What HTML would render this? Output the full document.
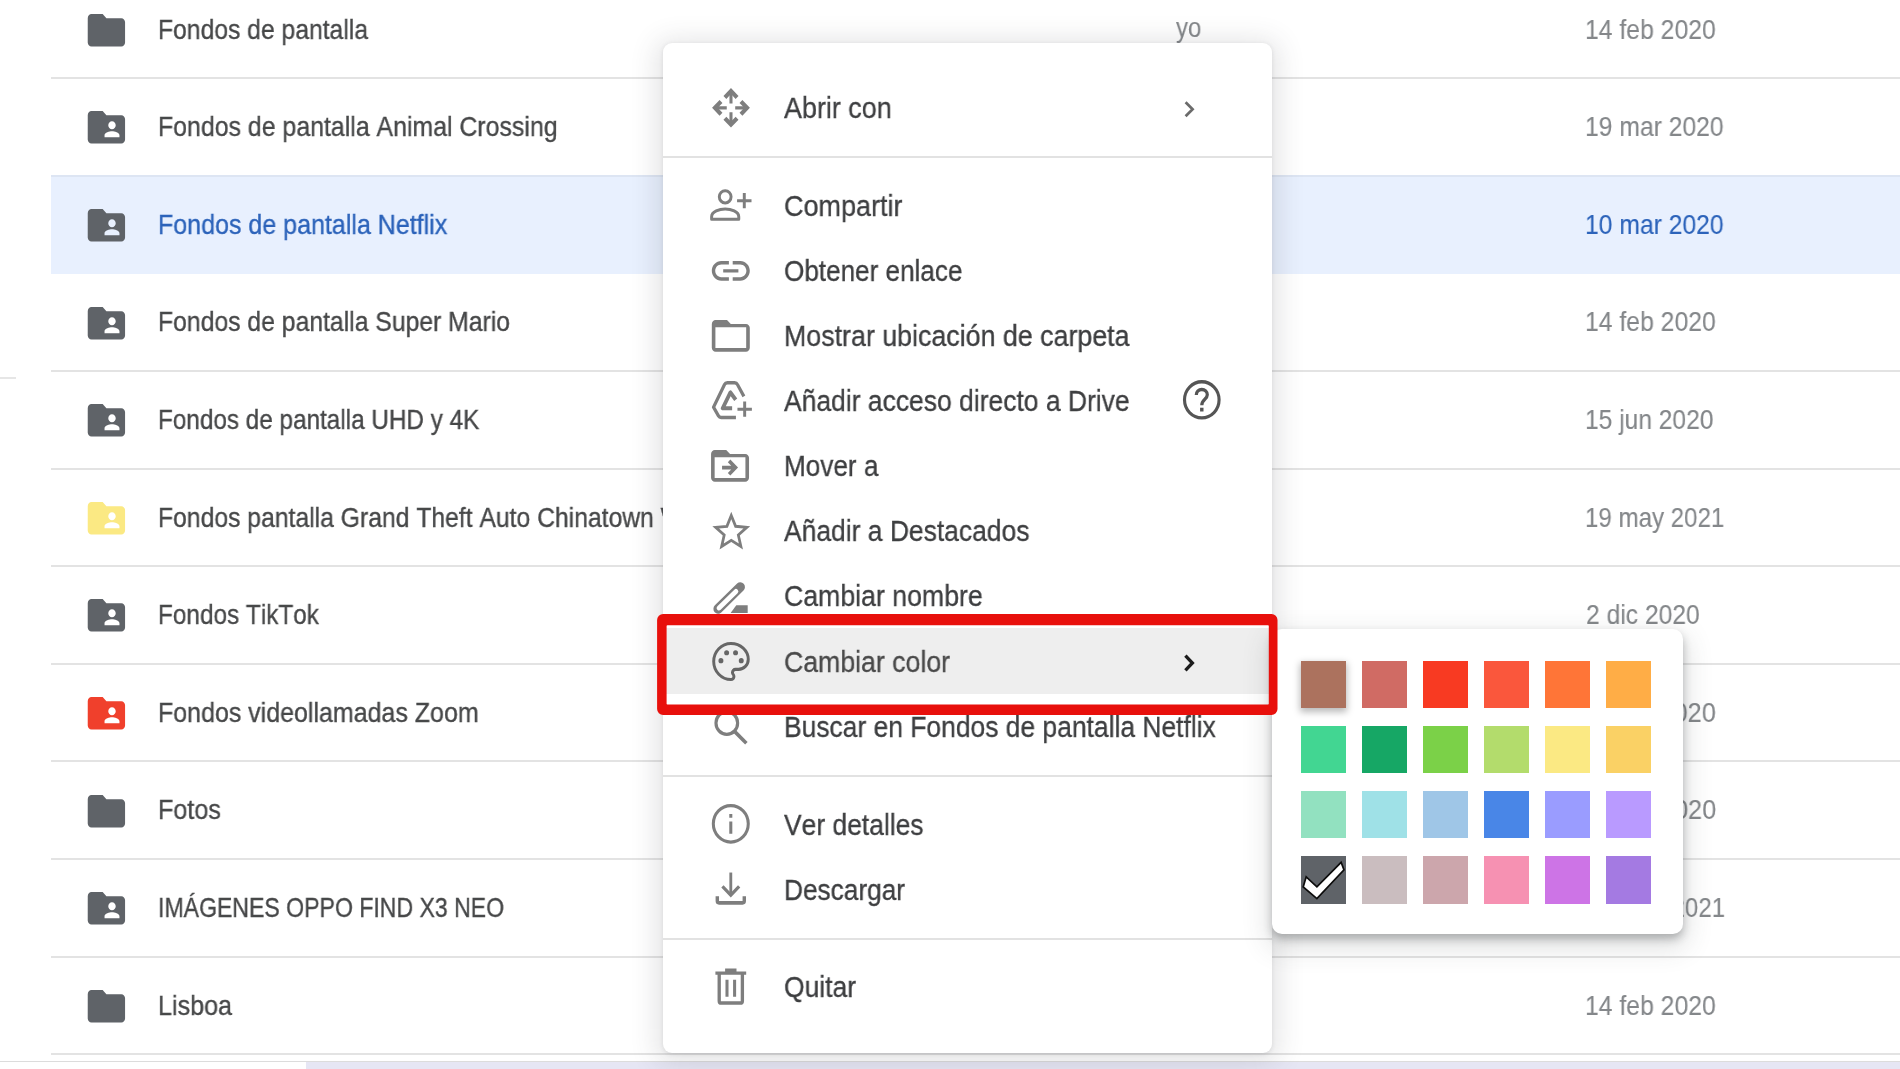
<!DOCTYPE html>
<html><head><meta charset="utf-8"><title>Drive</title>
<style>
html,body{margin:0;padding:0;}
body{width:1900px;height:1069px;overflow:hidden;background:#fff;position:relative;font-family:"Liberation Sans",sans-serif;font-kerning:none;}
.t{position:absolute;white-space:nowrap;line-height:1;transform-origin:0 50%;display:block;will-change:transform;-webkit-text-stroke:0.35px currentColor;}
.sep{position:absolute;left:51px;right:0;height:2px;background:#e3e3e3;}
.ico{position:absolute;display:block;}
.abs{position:absolute;}
#menu{position:absolute;left:663px;top:43px;width:609px;height:1009.5px;background:#fff;border-radius:9px;
 box-shadow:0 1px 4px 0 rgba(60,64,67,.13),0 4px 26px 8px rgba(60,64,67,.13);}
.msep{position:absolute;left:663px;width:609px;height:2px;background:#e2e2e2;}
#pal{position:absolute;left:1271.8px;top:629.2px;width:411px;height:305.3px;background:#fff;border-radius:10px;
 box-shadow:0 5px 9px 0 rgba(40,44,47,.30),0 10px 26px 5px rgba(60,64,67,.15);}
.sw{position:absolute;width:45px;height:47.6px;}
#red{position:absolute;left:0;top:0;}
</style></head><body>

<div class="abs" style="left:51px;right:0;top:175.4px;height:98.6px;background:#e8f0fe"></div>
<div class="sep" style="top:77.2px;background:#e3e3e3"></div>
<div class="sep" style="top:174.8px;background:#dde5f3"></div>
<div class="sep" style="top:370.0px;background:#e3e3e3"></div>
<div class="sep" style="top:467.6px;background:#e3e3e3"></div>
<div class="sep" style="top:565.2px;background:#e3e3e3"></div>
<div class="sep" style="top:662.8px;background:#e3e3e3"></div>
<div class="sep" style="top:760.4px;background:#e3e3e3"></div>
<div class="sep" style="top:858.0px;background:#e3e3e3"></div>
<div class="sep" style="top:955.6px;background:#e3e3e3"></div>
<div class="sep" style="top:1053.2px;background:#e3e3e3"></div>
<svg class="ico" style="left:83.7px;top:5.8px" width="44.8" height="48.5" viewBox="0 0 24 24" preserveAspectRatio="none"><path fill="#5f6368" d="M10 4H4c-1.1 0-1.99.9-1.99 2L2 18c0 1.1.9 2 2 2h16c1.1 0 2-.9 2-2V8c0-1.1-.9-2-2-2h-8l-2-2z"/></svg>
<span class="t" style="left:158.00px;top:15.52px;font-size:27.50px;color:#474849;transform:scaleX(0.8977);">Fondos de pantalla</span>
<span class="t" style="left:1585.01px;top:15.52px;font-size:27.50px;color:#84878a;transform:scaleX(0.9000);-webkit-text-stroke-width:0.12px;">14 feb 2020</span>
<svg class="ico" style="left:83.7px;top:103.4px" width="44.8" height="48.5" viewBox="0 0 24 24" preserveAspectRatio="none"><path fill="#5f6368" d="M20 6h-8l-2-2H4c-1.1 0-1.99.9-1.99 2L2 18c0 1.1.9 2 2 2h16c1.1 0 2-.9 2-2V8c0-1.1-.9-2-2-2zm-5 3c1.1 0 2 .9 2 2s-.9 2-2 2-2-.9-2-2 .9-2 2-2zm4 8h-8v-1c0-1.33 2.67-2 4-2s4 .67 4 2v1z"/></svg>
<span class="t" style="left:158.00px;top:113.12px;font-size:27.50px;color:#474849;transform:scaleX(0.9045);">Fondos de pantalla Animal Crossing</span>
<span class="t" style="left:1585.02px;top:113.12px;font-size:27.50px;color:#84878a;transform:scaleX(0.8979);-webkit-text-stroke-width:0.12px;">19 mar 2020</span>
<svg class="ico" style="left:83.7px;top:201.1px" width="44.8" height="48.5" viewBox="0 0 24 24" preserveAspectRatio="none"><path fill="#5f6368" d="M20 6h-8l-2-2H4c-1.1 0-1.99.9-1.99 2L2 18c0 1.1.9 2 2 2h16c1.1 0 2-.9 2-2V8c0-1.1-.9-2-2-2zm-5 3c1.1 0 2 .9 2 2s-.9 2-2 2-2-.9-2-2 .9-2 2-2zm4 8h-8v-1c0-1.33 2.67-2 4-2s4 .67 4 2v1z"/></svg>
<span class="t" style="left:158.00px;top:210.72px;font-size:27.50px;color:#2c63ba;transform:scaleX(0.9097);">Fondos de pantalla Netflix</span>
<span class="t" style="left:1585.02px;top:210.72px;font-size:27.50px;color:#2c63ba;transform:scaleX(0.8979);-webkit-text-stroke-width:0.12px;">10 mar 2020</span>
<svg class="ico" style="left:83.7px;top:298.6px" width="44.8" height="48.5" viewBox="0 0 24 24" preserveAspectRatio="none"><path fill="#5f6368" d="M20 6h-8l-2-2H4c-1.1 0-1.99.9-1.99 2L2 18c0 1.1.9 2 2 2h16c1.1 0 2-.9 2-2V8c0-1.1-.9-2-2-2zm-5 3c1.1 0 2 .9 2 2s-.9 2-2 2-2-.9-2-2 .9-2 2-2zm4 8h-8v-1c0-1.33 2.67-2 4-2s4 .67 4 2v1z"/></svg>
<span class="t" style="left:158.00px;top:308.32px;font-size:27.50px;color:#474849;transform:scaleX(0.8995);">Fondos de pantalla Super Mario</span>
<span class="t" style="left:1585.01px;top:308.32px;font-size:27.50px;color:#84878a;transform:scaleX(0.9000);-webkit-text-stroke-width:0.12px;">14 feb 2020</span>
<svg class="ico" style="left:83.7px;top:396.2px" width="44.8" height="48.5" viewBox="0 0 24 24" preserveAspectRatio="none"><path fill="#5f6368" d="M20 6h-8l-2-2H4c-1.1 0-1.99.9-1.99 2L2 18c0 1.1.9 2 2 2h16c1.1 0 2-.9 2-2V8c0-1.1-.9-2-2-2zm-5 3c1.1 0 2 .9 2 2s-.9 2-2 2-2-.9-2-2 .9-2 2-2zm4 8h-8v-1c0-1.33 2.67-2 4-2s4 .67 4 2v1z"/></svg>
<span class="t" style="left:158.00px;top:405.92px;font-size:27.50px;color:#474849;transform:scaleX(0.8831);">Fondos de pantalla UHD y 4K</span>
<span class="t" style="left:1585.03px;top:405.92px;font-size:27.50px;color:#84878a;transform:scaleX(0.8935);-webkit-text-stroke-width:0.12px;">15 jun 2020</span>
<svg class="ico" style="left:83.7px;top:493.8px" width="44.8" height="48.5" viewBox="0 0 24 24" preserveAspectRatio="none"><path fill="#fbe983" d="M20 6h-8l-2-2H4c-1.1 0-1.99.9-1.99 2L2 18c0 1.1.9 2 2 2h16c1.1 0 2-.9 2-2V8c0-1.1-.9-2-2-2zm-5 3c1.1 0 2 .9 2 2s-.9 2-2 2-2-.9-2-2 .9-2 2-2zm4 8h-8v-1c0-1.33 2.67-2 4-2s4 .67 4 2v1z"/></svg>
<span class="t" style="left:158.00px;top:503.52px;font-size:27.50px;color:#474849;transform:scaleX(0.8985);">Fondos pantalla Grand Theft Auto Chinatown Wars</span>
<span class="t" style="left:1585.06px;top:503.52px;font-size:27.50px;color:#84878a;transform:scaleX(0.8762);-webkit-text-stroke-width:0.12px;">19 may 2021</span>
<svg class="ico" style="left:83.7px;top:591.4px" width="44.8" height="48.5" viewBox="0 0 24 24" preserveAspectRatio="none"><path fill="#5f6368" d="M20 6h-8l-2-2H4c-1.1 0-1.99.9-1.99 2L2 18c0 1.1.9 2 2 2h16c1.1 0 2-.9 2-2V8c0-1.1-.9-2-2-2zm-5 3c1.1 0 2 .9 2 2s-.9 2-2 2-2-.9-2-2 .9-2 2-2zm4 8h-8v-1c0-1.33 2.67-2 4-2s4 .67 4 2v1z"/></svg>
<span class="t" style="left:158.00px;top:601.12px;font-size:27.50px;color:#474849;transform:scaleX(0.8851);">Fondos TikTok</span>
<span class="t" style="left:1585.66px;top:601.12px;font-size:27.50px;color:#84878a;transform:scaleX(0.8968);-webkit-text-stroke-width:0.12px;">2 dic 2020</span>
<svg class="ico" style="left:83.7px;top:689.0px" width="44.8" height="48.5" viewBox="0 0 24 24" preserveAspectRatio="none"><path fill="#f0402c" d="M20 6h-8l-2-2H4c-1.1 0-1.99.9-1.99 2L2 18c0 1.1.9 2 2 2h16c1.1 0 2-.9 2-2V8c0-1.1-.9-2-2-2zm-5 3c1.1 0 2 .9 2 2s-.9 2-2 2-2-.9-2-2 .9-2 2-2zm4 8h-8v-1c0-1.33 2.67-2 4-2s4 .67 4 2v1z"/></svg>
<span class="t" style="left:158.00px;top:698.72px;font-size:27.50px;color:#474849;transform:scaleX(0.9081);">Fondos videollamadas Zoom</span>
<span class="t" style="left:1584.97px;top:698.72px;font-size:27.50px;color:#84878a;transform:scaleX(0.9199);-webkit-text-stroke-width:0.12px;">15 dic 2020</span>
<svg class="ico" style="left:83.7px;top:786.6px" width="44.8" height="48.5" viewBox="0 0 24 24" preserveAspectRatio="none"><path fill="#5f6368" d="M10 4H4c-1.1 0-1.99.9-1.99 2L2 18c0 1.1.9 2 2 2h16c1.1 0 2-.9 2-2V8c0-1.1-.9-2-2-2h-8l-2-2z"/></svg>
<span class="t" style="left:158.00px;top:796.32px;font-size:27.50px;color:#474849;transform:scaleX(0.9147);">Fotos</span>
<span class="t" style="left:1585.63px;top:796.32px;font-size:27.50px;color:#84878a;transform:scaleX(0.9153);-webkit-text-stroke-width:0.12px;">27 dic 2020</span>
<svg class="ico" style="left:83.7px;top:884.2px" width="44.8" height="48.5" viewBox="0 0 24 24" preserveAspectRatio="none"><path fill="#5f6368" d="M20 6h-8l-2-2H4c-1.1 0-1.99.9-1.99 2L2 18c0 1.1.9 2 2 2h16c1.1 0 2-.9 2-2V8c0-1.1-.9-2-2-2zm-5 3c1.1 0 2 .9 2 2s-.9 2-2 2-2-.9-2-2 .9-2 2-2zm4 8h-8v-1c0-1.33 2.67-2 4-2s4 .67 4 2v1z"/></svg>
<span class="t" style="left:158.00px;top:893.92px;font-size:27.50px;color:#474849;transform:scaleX(0.8389);">IMÁGENES OPPO FIND X3 NEO</span>
<span class="t" style="left:1585.69px;top:893.92px;font-size:27.50px;color:#84878a;transform:scaleX(0.8748);-webkit-text-stroke-width:0.12px;">21 may 2021</span>
<svg class="ico" style="left:83.7px;top:981.8px" width="44.8" height="48.5" viewBox="0 0 24 24" preserveAspectRatio="none"><path fill="#5f6368" d="M10 4H4c-1.1 0-1.99.9-1.99 2L2 18c0 1.1.9 2 2 2h16c1.1 0 2-.9 2-2V8c0-1.1-.9-2-2-2h-8l-2-2z"/></svg>
<span class="t" style="left:158.00px;top:991.52px;font-size:27.50px;color:#474849;transform:scaleX(0.9132);">Lisboa</span>
<span class="t" style="left:1585.01px;top:991.52px;font-size:27.50px;color:#84878a;transform:scaleX(0.9000);-webkit-text-stroke-width:0.12px;">14 feb 2020</span>
<span class="t" style="left:1176.24px;top:14.12px;font-size:27.50px;color:#84878a;transform:scaleX(0.8698);-webkit-text-stroke-width:0.12px;">yo</span>
<div class="abs" style="left:0;top:377px;width:16px;height:2px;background:#e6e6e6"></div>
<div class="abs" style="left:0;top:1060.5px;width:1900px;height:1.5px;background:#dcdcdc"></div>
<div class="abs" style="left:306px;top:1062px;width:1594px;height:7px;background:#e6e6f4"></div>
<div id="menu"></div>
<div class="msep" style="top:156.2px"></div>
<div class="msep" style="top:775.2px"></div>
<div class="msep" style="top:938.3px"></div>
<div class="abs" style="left:663px;top:628px;width:609px;height:65.6px;background:#eeeeee"></div>
<svg class="ico" style="left:708.4px;top:83.6px" width="45.6" height="47.6" viewBox="0 0 24 24" preserveAspectRatio="none"><g transform="translate(12.1 12) scale(0.89) translate(-12 -12)"><g fill="none" stroke="#7e7e7e" stroke-width="2.4" stroke-linejoin="miter"><path d="M8.4 6.1L12 2.5l3.6 3.6M8.4 17.9L12 21.5l3.6-3.6M6.1 8.4L2.5 12l3.6 3.6M17.9 8.4L21.5 12l-3.6 3.6"/></g><g fill="none" stroke="#7e7e7e" stroke-width="1.8" ><path d="M12 3.5V9.5M12 20.5V14.5M3.5 12H9.5M20.5 12H14.5"/></g></g></svg>
<span class="t" style="left:784.40px;top:91.97px;font-size:30.40px;color:#3e3f41;transform:scaleX(0.8858);">Abrir con</span>
<svg class="ico" style="left:708.4px;top:181.3px" width="45.6" height="47.6" viewBox="0 0 24 24" preserveAspectRatio="none"><g fill="none" stroke="#7e7e7e" stroke-width="1.55" ><circle cx="9.05" cy="8" r="3.1"/><path d="M1.9 19.3V18c0-2.5 4.1-3.9 7.15-3.9s7.15 1.4 7.15 3.9v1.3z" stroke-linejoin="round"/><path d="M19.1 6.1v7.7M15.3 9.95h7.6"/></g></svg>
<span class="t" style="left:784.40px;top:189.67px;font-size:30.40px;color:#3e3f41;transform:scaleX(0.8884);">Compartir</span>
<svg class="ico" style="left:708.4px;top:246.6px" width="45.6" height="47.6" viewBox="0 0 24 24" preserveAspectRatio="none"><path fill="#7e7e7e" d="M3.8 12c0-1.76 1.44-3.2 3.2-3.2h4V7H7c-2.76 0-5 2.24-5 5s2.24 5 5 5h4v-1.8H7c-1.76 0-3.2-1.44-3.2-3.2zM8 12.8h8v-1.6H8v1.6zM17 7h-4v1.8h4c1.76 0 3.2 1.44 3.2 3.2s-1.44 3.2-3.2 3.2h-4V17h4c2.76 0 5-2.24 5-5s-2.24-5-5-5z"/></svg>
<span class="t" style="left:784.40px;top:254.97px;font-size:30.40px;color:#3e3f41;transform:scaleX(0.8585);">Obtener enlace</span>
<svg class="ico" style="left:708.4px;top:311.7px" width="45.6" height="47.6" viewBox="0 0 24 24" preserveAspectRatio="none"><path fill="#7e7e7e" d="M20 6h-8l-2-2H4c-1.1 0-1.99.9-1.99 2L2 18c0 1.1.9 2 2 2h16c1.1 0 2-.9 2-2V8c0-1.1-.9-2-2-2zm.1 12.1H3.9V7.7h16.2v10.4z"/></svg>
<span class="t" style="left:784.40px;top:320.07px;font-size:30.40px;color:#3e3f41;transform:scaleX(0.8816);">Mostrar ubicación de carpeta</span>
<svg class="ico" style="left:708.4px;top:376.8px" width="45.6" height="47.6" viewBox="0 0 24 24" preserveAspectRatio="none"><g fill="none" stroke="#7e7e7e" stroke-width="1.7" ><path d="M18.9 9.8L15.5 3.8c-.3-.6-.8-.9-1.5-.9h-3.8c-.7 0-1.2.3-1.5.9L2.9 15.2l2.6 4.4c.3.5.8.8 1.4.8h7.8" stroke-linejoin="round"/></g><g fill="none" stroke="#7e7e7e" stroke-width="2.0" ><path d="M14.6 11.5L11.8 7.8 7.7 15.8h5" stroke-linejoin="round"/></g><g fill="none" stroke="#7e7e7e" stroke-width="1.55" ><path d="M19.3 12.4v7.7M15.5 16.25h7.6"/></g></svg>
<span class="t" style="left:784.40px;top:385.17px;font-size:30.40px;color:#3e3f41;transform:scaleX(0.8708);">Añadir acceso directo a Drive</span>
<svg class="ico" style="left:708.4px;top:441.9px" width="45.6" height="47.6" viewBox="0 0 24 24" preserveAspectRatio="none"><g transform="translate(-0.4 0)"><path fill="#7e7e7e" d="M20 6h-8l-2-2H4c-1.1 0-1.99.9-1.99 2L2 18c0 1.1.9 2 2 2h16c1.1 0 2-.9 2-2V8c0-1.1-.9-2-2-2zm.1 12.1H3.9V7.7h16.2v10.4z"/><g fill="none" stroke="#7e7e7e" stroke-width="1.85" ><path d="M7.8 12.9h6.6M11.5 9.5l3.4 3.4-3.4 3.4"/></g></g></svg>
<span class="t" style="left:784.40px;top:450.27px;font-size:30.40px;color:#3e3f41;transform:scaleX(0.8596);">Mover a</span>
<svg class="ico" style="left:708.4px;top:507.0px" width="45.6" height="47.6" viewBox="0 0 24 24" preserveAspectRatio="none"><g fill="none" stroke="#7e7e7e" stroke-width="1.45" ><path d="M12.25 4.30 L14.55 9.73 L20.45 10.24 L15.97 14.12 L17.32 19.88 L12.25 16.82 L7.18 19.88 L8.53 14.12 L4.05 10.24 L9.95 9.74 Z" stroke-linejoin="miter"/></g></svg>
<span class="t" style="left:784.40px;top:515.37px;font-size:30.40px;color:#3e3f41;transform:scaleX(0.8701);">Añadir a Destacados</span>
<svg class="ico" style="left:708.4px;top:572.1px" width="45.6" height="47.6" viewBox="0 0 24 24" preserveAspectRatio="none"><path d="M5.3 18.6L17.0 7.6" stroke="#7e7e7e" stroke-width="4.9" stroke-linecap="round" fill="none"/><path d="M5.8 18.15L14.7 9.8" stroke="#fff" stroke-width="2.5" stroke-linecap="round" fill="none"/><path fill="#7e7e7e" d="M14.9 16.8h6v3.9H11.9z"/></svg>
<span class="t" style="left:784.40px;top:580.47px;font-size:30.40px;color:#3e3f41;transform:scaleX(0.8780);">Cambiar nombre</span>
<svg class="ico" style="left:708.4px;top:637.2px" width="45.6" height="47.6" viewBox="0 0 24 24" preserveAspectRatio="none"><g transform="translate(0.1 0.35)"><g fill="none" stroke="#666" stroke-width="1.55"><path d="M12 2.9c-5 0-9.1 4.1-9.1 9.1s4.1 9.1 9.1 9.1c.9 0 1.55-.7 1.55-1.55 0-.4-.15-.75-.4-1.05-.22-.26-.37-.6-.37-.98 0-.85.7-1.55 1.55-1.55H16c2.8 0 5.1-2.25 5.1-5.05 0-4.45-4.1-8.02-9.1-8.02z"/></g><g fill="#666"><circle cx="6.7" cy="11.6" r="1.3"/><circle cx="9.7" cy="7.6" r="1.3"/><circle cx="14.4" cy="7.6" r="1.3"/><circle cx="17.4" cy="11.6" r="1.3"/></g></g></svg>
<span class="t" style="left:784.40px;top:645.57px;font-size:30.40px;color:#4a4a4a;transform:scaleX(0.8775);">Cambiar color</span>
<svg class="ico" style="left:708.4px;top:702.3px" width="45.6" height="47.6" viewBox="0 0 24 24" preserveAspectRatio="none"><g fill="none" stroke="#7e7e7e" stroke-width="1.65" ><circle cx="9.9" cy="10.6" r="5.7"/></g><g fill="none" stroke="#7e7e7e" stroke-width="1.9" ><path d="M14.1 14.9l6.1 5.9"/></g></svg>
<span class="t" style="left:784.40px;top:710.67px;font-size:30.40px;color:#3e3f41;transform:scaleX(0.8693);">Buscar en Fondos de pantalla Netflix</span>
<svg class="ico" style="left:708.4px;top:800.3px" width="45.6" height="47.6" viewBox="0 0 24 24" preserveAspectRatio="none"><g fill="none" stroke="#7e7e7e" stroke-width="1.6" ><circle cx="12" cy="12" r="9.2"/></g><path fill="#7e7e7e" d="M11.2 7h1.6v1.9h-1.6zm0 3.9h1.6V17h-1.6z"/></svg>
<span class="t" style="left:784.40px;top:808.67px;font-size:30.40px;color:#3e3f41;transform:scaleX(0.8693);">Ver detalles</span>
<svg class="ico" style="left:708.4px;top:865.4px" width="45.6" height="47.6" viewBox="0 0 24 24" preserveAspectRatio="none"><g fill="none" stroke="#7e7e7e" stroke-width="1.5" ><path d="M12 3.8v11"/></g><g fill="none" stroke="#7e7e7e" stroke-width="1.7" ><path d="M7.6 10.8l4.4 4.4 4.4-4.4"/></g><g fill="none" stroke="#7e7e7e" stroke-width="1.8" ><path d="M4.9 15.8v2.4c0 .5.4.9.9.9h12.4c.5 0 .9-.4.9-.9v-2.4" stroke-linejoin="round"/></g></svg>
<span class="t" style="left:784.40px;top:873.77px;font-size:30.40px;color:#3e3f41;transform:scaleX(0.8631);">Descargar</span>
<svg class="ico" style="left:708.4px;top:962.8px" width="45.6" height="47.6" viewBox="0 0 24 24" preserveAspectRatio="none"><g fill="none" stroke="#7e7e7e" stroke-width="1.75" ><path d="M3.9 5.1h16.2M9 3.6h6" /><path d="M5.9 5.5v13.6c0 .6.5 1.1 1.1 1.1h10c.6 0 1.1-.5 1.1-1.1V5.5" stroke-linejoin="round"/></g><g fill="none" stroke="#7e7e7e" stroke-width="1.6" ><path d="M10 8.4v8.6M14 8.4v8.6"/></g></svg>
<span class="t" style="left:784.40px;top:971.17px;font-size:30.40px;color:#3e3f41;transform:scaleX(0.8702);">Quitar</span>
<svg class="ico" style="left:1180px;top:97px" width="20" height="24" viewBox="0 0 20 24"><path d="M5.6 5.2L12.6 12.2L5.6 19.2" fill="none" stroke="#6b6b6b" stroke-width="2.7"/></svg>
<svg class="ico" style="left:1180px;top:650.5px" width="20" height="24" viewBox="0 0 20 24"><path d="M5.4 4.6L12.4 12L5.4 19.4" fill="none" stroke="#1c1c1c" stroke-width="3.3"/></svg>
<svg class="ico" style="left:1179.3px;top:376.4px" width="45.6" height="47.6" viewBox="0 0 24 24" preserveAspectRatio="none"><g fill="none" stroke="#555" stroke-width="1.65"><circle cx="12" cy="12" r="9.1"/><path d="M9.1 9.6c0-1.6 1.3-2.8 2.9-2.8s2.9 1.2 2.9 2.7c0 2.2-2.9 2.3-2.9 5.2" stroke-width="1.7"/></g><rect x="11.1" y="16" width="1.8" height="1.9" fill="#555"/></svg>
<div id="pal"></div>
<div class="sw" style="left:1300.9px;top:660.5px;background:#ac725e;box-shadow:0 3px 7px 1px rgba(0,0,0,.28);"></div>
<div class="sw" style="left:1361.8px;top:660.5px;background:#d06b64;"></div>
<div class="sw" style="left:1422.8px;top:660.5px;background:#f83a22;"></div>
<div class="sw" style="left:1483.7px;top:660.5px;background:#fa573c;"></div>
<div class="sw" style="left:1544.7px;top:660.5px;background:#ff7537;"></div>
<div class="sw" style="left:1605.6px;top:660.5px;background:#ffad46;"></div>
<div class="sw" style="left:1300.9px;top:725.7px;background:#42d692;"></div>
<div class="sw" style="left:1361.8px;top:725.7px;background:#16a765;"></div>
<div class="sw" style="left:1422.8px;top:725.7px;background:#7bd148;"></div>
<div class="sw" style="left:1483.7px;top:725.7px;background:#b3dc6c;"></div>
<div class="sw" style="left:1544.7px;top:725.7px;background:#fbe983;"></div>
<div class="sw" style="left:1605.6px;top:725.7px;background:#fad165;"></div>
<div class="sw" style="left:1300.9px;top:790.8px;background:#92e1c0;"></div>
<div class="sw" style="left:1361.8px;top:790.8px;background:#9fe1e7;"></div>
<div class="sw" style="left:1422.8px;top:790.8px;background:#9fc6e7;"></div>
<div class="sw" style="left:1483.7px;top:790.8px;background:#4986e7;"></div>
<div class="sw" style="left:1544.7px;top:790.8px;background:#9a9cff;"></div>
<div class="sw" style="left:1605.6px;top:790.8px;background:#b99aff;"></div>
<div class="sw" style="left:1300.9px;top:856.0px;background:#5f6368;"></div>
<div class="sw" style="left:1361.8px;top:856.0px;background:#cabdbf;"></div>
<div class="sw" style="left:1422.8px;top:856.0px;background:#cca6ac;"></div>
<div class="sw" style="left:1483.7px;top:856.0px;background:#f691b2;"></div>
<div class="sw" style="left:1544.7px;top:856.0px;background:#cd74e6;"></div>
<div class="sw" style="left:1605.6px;top:856.0px;background:#a47ae2;"></div>
<svg class="ico" style="left:1300.6px;top:856px" width="46" height="48" viewBox="0 0 46 48"><path d="M5.2 20.8 L15.9 30.8 L40.1 6.3 L43.0 13.9 L15.9 42.6 L2.2 31.0 Z" fill="#fff" stroke="#0c0c0c" stroke-width="1.7" stroke-linejoin="miter"/></svg>
<svg id="red" width="1900" height="1069" viewBox="0 0 1900 1069"><path fill="#e8100c" fill-rule="evenodd" d="M663.10 613.90 H1271.50 A6.00 6.00 0 0 1 1277.50 619.90 V708.90 A6.00 6.00 0 0 1 1271.50 714.90 H663.10 A6.00 6.00 0 0 1 657.10 708.90 V619.90 A6.00 6.00 0 0 1 663.10 613.90 Z M667.40 625.20 H1268.00 A0.80 0.80 0 0 1 1268.80 626.00 V703.80 A0.80 0.80 0 0 1 1268.00 704.60 H667.40 A0.80 0.80 0 0 1 666.60 703.80 V626.00 A0.80 0.80 0 0 1 667.40 625.20 Z"/></svg>
</body></html>
